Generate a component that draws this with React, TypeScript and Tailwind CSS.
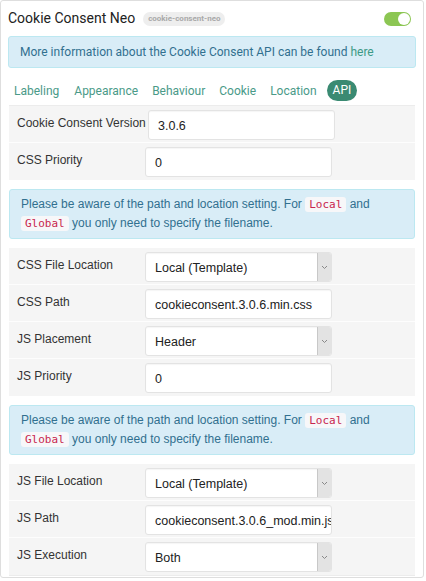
import React from 'react';

const Code = ({ children }: { children: React.ReactNode }) => (
  <code className="px-1 py-[1px] rounded-[3px] bg-[#f7f7f9] text-[#c7254e] text-[11px] font-['DejaVu_Sans_Mono',monospace]">
    {children}
  </code>
);

const Notice = () => (
  <div className="my-[9px] px-[11px] py-[5px] bg-[#d9edf7] border border-[#bce8f1] rounded-[3px] text-[12px] leading-[18px] text-[#31708f] font-['Liberation_Sans',sans-serif]">
    Please be aware of the path and location setting. For <Code>Local</Code> and <Code>Global</Code> you only need to specify the filename.
  </div>
);

type Row = { label: string; value: string; select?: boolean; left?: number };

const Field = ({ row, last }: { row: Row; last?: boolean }) => (
  <div className={`flex items-start h-[37px] bg-[#f5f5f5] font-['Liberation_Sans',sans-serif] ${last ? '' : 'border-b border-[#fdfdfd]'}`}>
    <div className="w-[136px] shrink-0 pl-2 pt-[10px] text-[12px] leading-[14px] text-[#333] whitespace-nowrap">{row.label}</div>
    <div
      className="mt-[4px] w-[187px] h-[30px] bg-white border border-[#e3e3e3] rounded-[3px] flex items-center shadow-[inset_0_1px_1px_rgba(0,0,0,0.04)] overflow-hidden"
      style={{ marginLeft: row.left ?? 0 }}
    >
      <span className="flex-1 pl-[9px] pt-[3px] text-[12.5px] text-[#222] whitespace-nowrap overflow-hidden">{row.value}</span>
      {row.select && (
        <span className="w-[14px] h-full bg-[#e3e3e3] border-l border-[#c8c8c8] flex items-center justify-center">
          <svg width="7" height="5" viewBox="0 0 7 5">
            <path d="M1 1l2.5 2.5L6 1" fill="none" stroke="#888" strokeWidth="1" />
          </svg>
        </span>
      )}
    </div>
  </div>
);

const Table = ({ rows }: { rows: Row[] }) => (
  <div className="flex flex-col">
    {rows.map((r, i) => (
      <Field key={r.label} row={r} last={i === rows.length - 1} />
    ))}
  </div>
);

export default function App() {
  const tabs = ['Labeling', 'Appearance', 'Behaviour', 'Cookie', 'Location'];
  return (
    <div className="w-[426px] h-[581px] bg-white font-['Roboto',sans-serif]">
      <div className="w-[424px] h-[578px] border border-[#dedede] rounded-[3px] px-[7px]">
        <div className="h-[35px] flex items-center">
          <span className="text-[14px] text-[#222]">Cookie Consent Neo</span>
          <span className="ml-2 px-[5px] h-[14px] leading-[14px] rounded-full bg-[#eeeeee] text-[#a9a9a9] text-[8px] font-bold">
            cookie-consent-neo
          </span>
          <span className="ml-auto mr-[5px] w-[27px] h-[14px] rounded-full bg-[#8cc653] flex items-center justify-end pr-[1px]">
            <span className="w-[12px] h-[12px] rounded-full bg-white" />
          </span>
        </div>

        <div className="h-[32px] px-[11px] flex items-center bg-[#d9edf7] border border-[#bce8f1] rounded-[3px] text-[12px] text-[#31708f]">
          <span>
            More information about the Cookie Consent API can be found <span className="text-[#3d9a86]">here</span>
          </span>
        </div>

        <div className="mt-[12px] h-[21px] flex items-center text-[12px] text-[#4a9a88]">
          <span className="pl-[6px] pr-[8px]">Labeling</span>
          {tabs.slice(1).map((t) => (
            <span key={t} className="px-[7px]">{t}</span>
          ))}
          <span className="ml-[3px] px-[6px] h-[21px] leading-[21px] rounded-full bg-[#3a8a72] text-white">API</span>
        </div>

        <div className="mt-[4px] border-t border-[#ececec] mx-[1px]">
          <Table
            rows={[
              { label: 'Cookie Consent Version', value: '3.0.6', left: 3 },
              { label: 'CSS Priority', value: '0' },
            ]}
          />
          <Notice />
          <Table
            rows={[
              { label: 'CSS File Location', value: 'Local (Template)', select: true },
              { label: 'CSS Path', value: 'cookieconsent.3.0.6.min.css' },
              { label: 'JS Placement', value: 'Header', select: true },
              { label: 'JS Priority', value: '0' },
            ]}
          />
          <Notice />
          <Table
            rows={[
              { label: 'JS File Location', value: 'Local (Template)', select: true },
              { label: 'JS Path', value: 'cookieconsent.3.0.6_mod.min.js' },
              { label: 'JS Execution', value: 'Both', select: true },
            ]}
          />
          <div className="border-t border-[#ececec]" />
        </div>
      </div>
    </div>
  );
}
